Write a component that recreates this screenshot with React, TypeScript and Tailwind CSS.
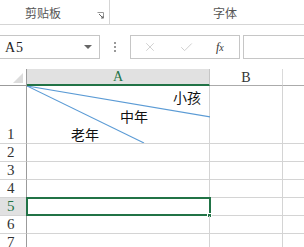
import { X, Check } from 'lucide-react'

const ui = { fontFamily: '"Noto Sans CJK SC", "Noto Sans", sans-serif' }
const mono = { fontFamily: '"Liberation Serif", "Times New Roman", serif' }
const cjk = { fontFamily: '"Noto Sans CJK SC", sans-serif' }

const rows = [2, 3, 4, 5, 6, 7]

export default function App() {
  return (
    <div className="relative h-[247px] w-[304px] overflow-hidden bg-white text-[#444]">
      {/* ribbon group labels */}
      <div className="flex h-[25px] border-b border-[#d5d5d5]" style={ui}>
        <div className="flex w-[110px] items-start border-r border-[#d5d5d5] pb-[5px]">
          <span className="ml-[25px] mt-[6px] text-[12px] leading-[14px] text-[#555]">剪贴板</span>
          <svg width="7" height="7" viewBox="0 0 7 7" className="ml-[36px] mt-[12px]">
            <path d="M0.5 0.5h6v6" fill="none" stroke="#999" />
            <path d="M2 2l4 4M4 6h2V4" fill="none" stroke="#666" />
          </svg>
        </div>
        <div className="flex flex-1 justify-center pl-[36px]">
          <span className="mt-[6px] text-[12px] leading-[14px] text-[#555]">字体</span>
        </div>
      </div>

      {/* formula bar */}
      <div className="mt-[10px] flex h-[24px] items-stretch">
        <div className="-ml-px flex w-[101px] items-center justify-between border border-[#c6c6c6] pl-[5px] pr-[7px]">
          <span className="text-[14px] tracking-[1px] text-[#222]" style={mono}>A5</span>
          <svg width="8" height="5" viewBox="0 0 8 5"><path d="M0 0h8L4 4z" fill="#666" /></svg>
        </div>
        <div className="flex w-[30px] flex-col items-center justify-center gap-[2px]">
          <span className="h-[2px] w-[2px] bg-[#999]" />
          <span className="h-[2px] w-[2px] bg-[#999]" />
          <span className="h-[2px] w-[2px] bg-[#999]" />
        </div>
        <div className="flex w-[110px] items-center border border-[#c6c6c6] pl-[12px]">
          <X size={14} strokeWidth={1.4} className="text-[#c8c8c8]" />
          <Check size={15} strokeWidth={1.4} className="ml-[22px] text-[#c8c8c8]" />
          <span className="ml-[22px] text-[12px] italic text-[#333]" style={{ fontFamily: '"Liberation Serif", serif' }}>
            f<span className="text-[10px]">x</span>
          </span>
        </div>
        <div className="ml-[3px] flex-1 border border-r-0 border-[#c6c6c6]" />
      </div>

      {/* sheet */}
      <div className="mt-[10px]" style={mono}>
        {/* header row */}
        <div className="flex h-[17px]">
          <div className="relative w-[27px] border-r border-b border-[#9b9b9b]">
            <svg width="10" height="10" viewBox="0 0 10 10" className="absolute right-[3px] bottom-[2px]">
              <path d="M10 0V10H0z" fill="#dcdcdc" />
            </svg>
          </div>
          <div className="flex w-[183px] items-center justify-center border-r border-b-2 border-r-[#c6c6c6] border-b-[#217346] bg-[#e1e1e1] text-[14px] text-[#217346]">
            A
          </div>
          <div className="flex w-[73px] items-center justify-center border-r border-b border-r-[#dadada] border-b-[#ababab] text-[14px] text-[#333]">
            B
          </div>
          <div className="flex-1 border-b border-[#ababab]" />
        </div>

        {/* row 1 */}
        <div className="flex h-[58px]">
          <div className="flex w-[27px] items-end border-r border-b border-r-[#9b9b9b] border-b-[#d4d4d4] pb-[1px] pl-[7px] text-[15px] leading-[15px] text-[#333]">
            1
          </div>
          <div className="relative flex w-[183px] flex-col border-r border-b border-[#d4d4d4] text-[14px] leading-[16px] text-[#111]" style={cjk}>
            <svg className="absolute inset-0" width="183" height="57" viewBox="0 0 183 57">
              <line x1="0" y1="0" x2="184" y2="31" stroke="#5b9bd5" strokeWidth="1.1" />
              <line x1="0" y1="0" x2="117" y2="57" stroke="#5b9bd5" strokeWidth="1.1" />
            </svg>
            <span className="relative mt-[3px] self-end pr-[8px]">小孩</span>
            <span className="relative mt-[3px] ml-[93px]">中年</span>
            <span className="relative mt-[2px] ml-[44px]">老年</span>
          </div>
          <div className="w-[73px] border-r border-b border-[#d4d4d4]" />
          <div className="flex-1 border-b border-[#d4d4d4]" />
        </div>

        {rows.map((n) => (
          <div key={n} className="flex h-[18px]">
            <div
              className={`flex w-[27px] items-center border-r border-b border-r-[#9b9b9b] border-b-[#d4d4d4] pl-[7px] text-[15px] ${n === 5 ? 'bg-[#e1e1e1] text-[#217346]' : 'text-[#333]'}`}
            >
              {n}
            </div>
            <div className="relative w-[183px] border-r border-b border-[#d4d4d4]">
              {n === 5 && (
                <>
                  <div className="absolute -top-px -left-px h-[19px] w-[185px] border-2 border-[#217346]" />
                  <div className="absolute -right-[3px] -bottom-[3px] h-[5px] w-[5px] border border-white bg-[#217346]" />
                </>
              )}
            </div>
            <div className="w-[73px] border-r border-b border-[#d4d4d4]" />
            <div className="flex-1 border-b border-[#d4d4d4]" />
          </div>
        ))}
      </div>
    </div>
  )
}
